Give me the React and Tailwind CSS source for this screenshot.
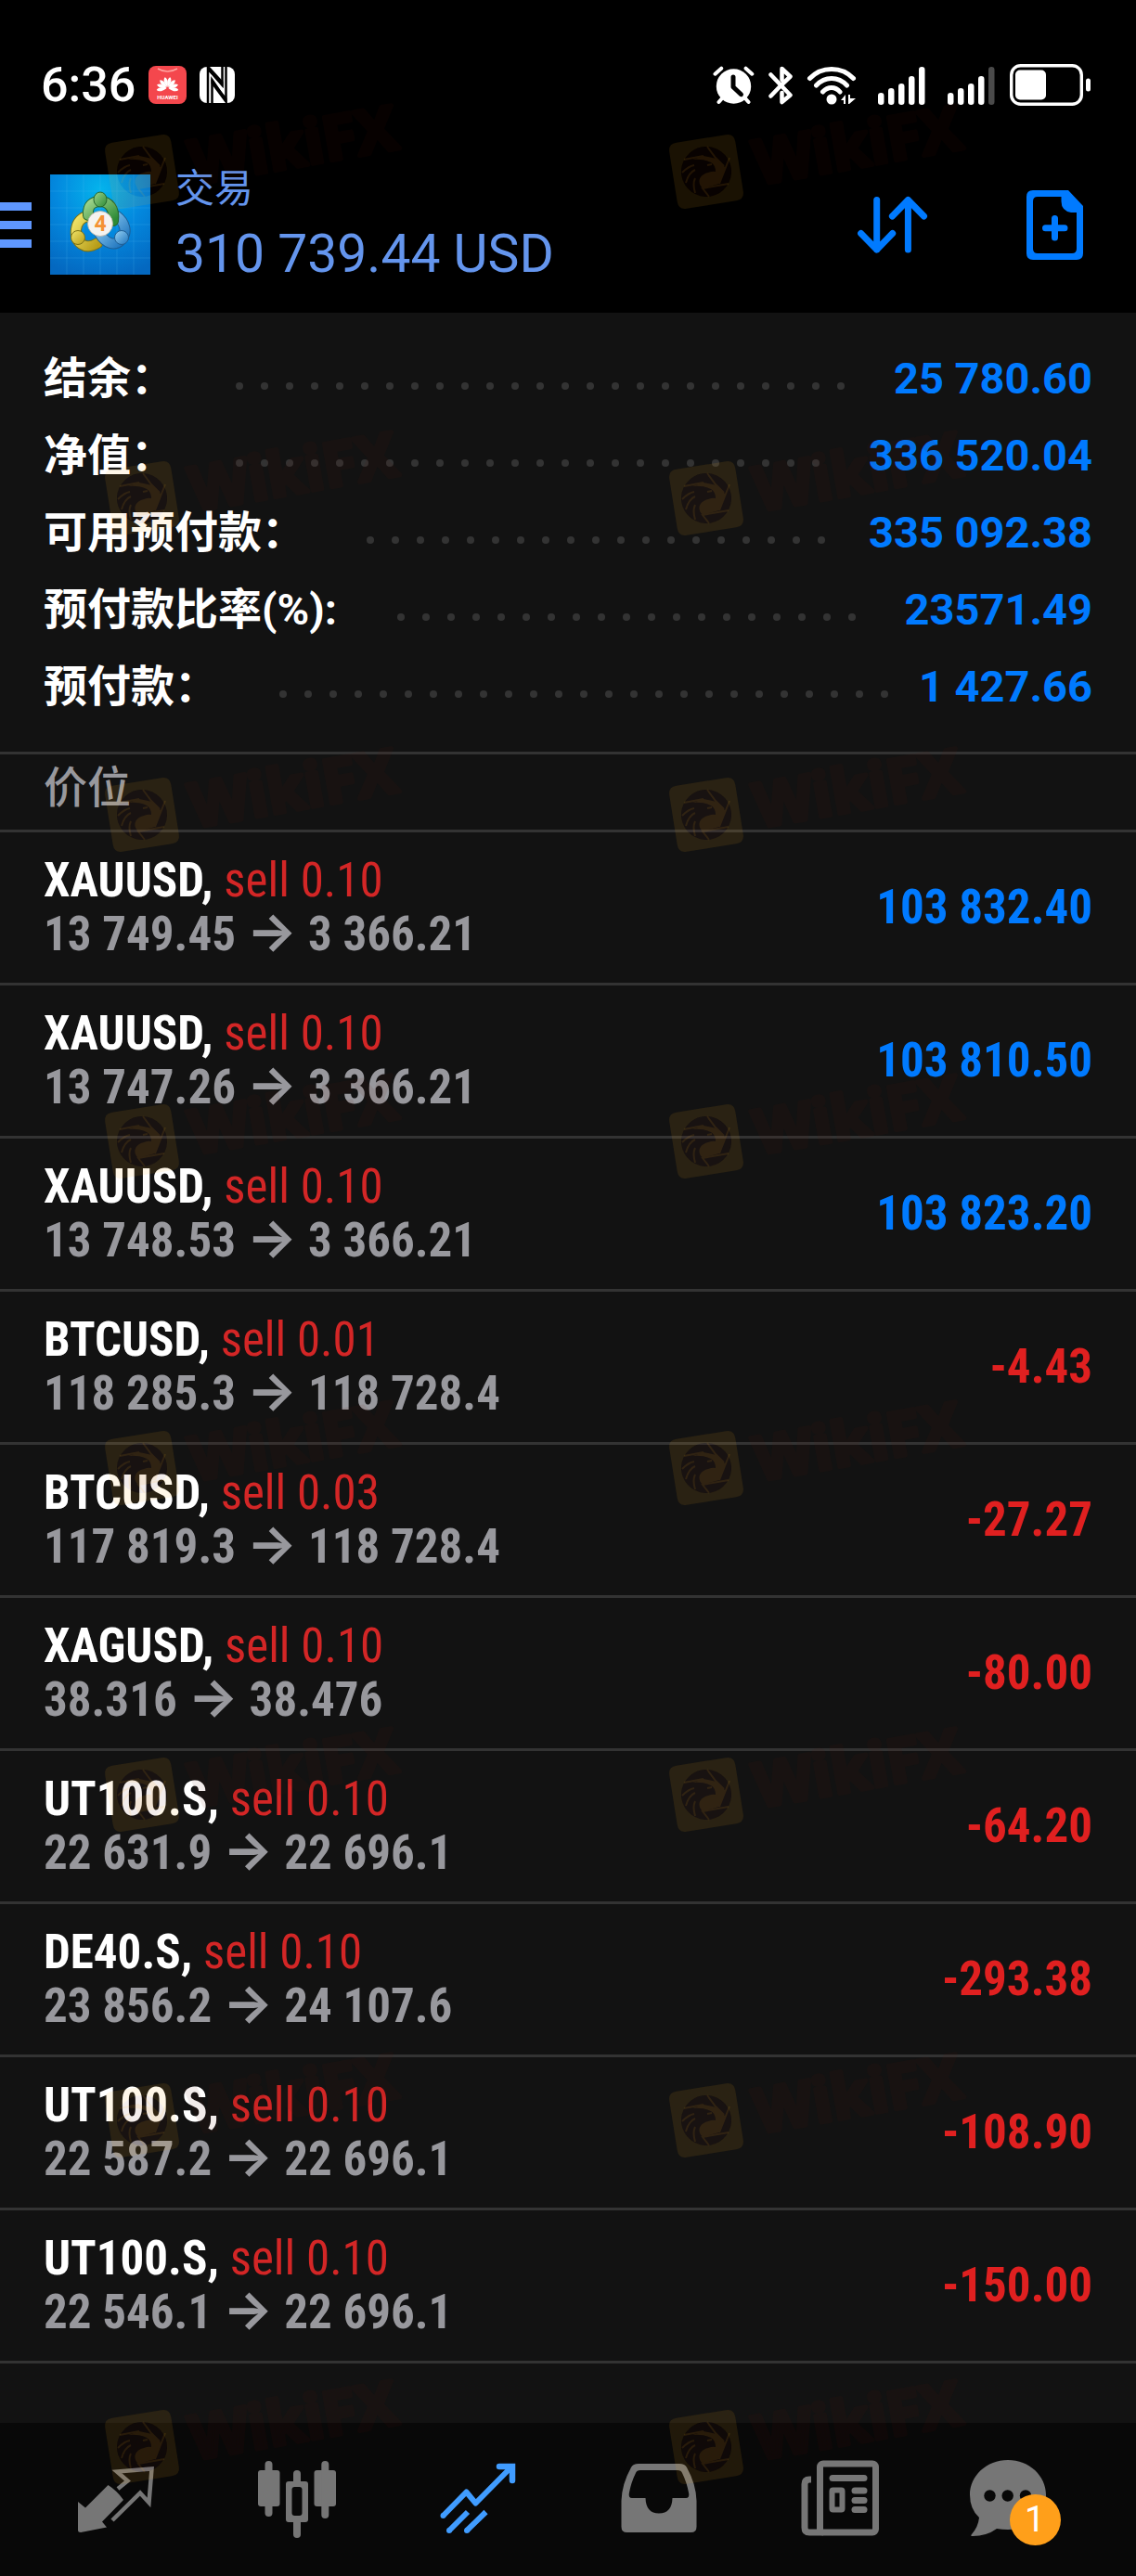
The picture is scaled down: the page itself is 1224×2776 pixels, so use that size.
import React from 'react'

const summary = [
  { label: '结余：', value: '25 780.60' },
  { label: '净值：', value: '336 520.04' },
  { label: '可用预付款：', value: '335 092.38' },
  { label: '预付款比率(%):', value: '23571.49' },
  { label: '预付款：', value: '1 427.66' },
]

const positions = [
  { id: 1, symbol: 'XAUUSD', volume: '0.10', open: '13 749.45', current: '3 366.21', profit: '103 832.40' },
  { id: 2, symbol: 'XAUUSD', volume: '0.10', open: '13 747.26', current: '3 366.21', profit: '103 810.50' },
  { id: 3, symbol: 'XAUUSD', volume: '0.10', open: '13 748.53', current: '3 366.21', profit: '103 823.20' },
  { id: 4, symbol: 'BTCUSD', volume: '0.01', open: '118 285.3', current: '118 728.4', profit: '-4.43' },
  { id: 5, symbol: 'BTCUSD', volume: '0.03', open: '117 819.3', current: '118 728.4', profit: '-27.27' },
  { id: 6, symbol: 'XAGUSD', volume: '0.10', open: '38.316', current: '38.476', profit: '-80.00' },
  { id: 7, symbol: 'UT100.S', volume: '0.10', open: '22 631.9', current: '22 696.1', profit: '-64.20' },
  { id: 8, symbol: 'DE40.S', volume: '0.10', open: '23 856.2', current: '24 107.6', profit: '-293.38' },
  { id: 9, symbol: 'UT100.S', volume: '0.10', open: '22 587.2', current: '22 696.1', profit: '-108.90' },
  { id: 10, symbol: 'UT100.S', volume: '0.10', open: '22 546.1', current: '22 696.1', profit: '-150.00' },
]

const watermarkRows = [124, 476, 817, 1169, 1521, 1873, 2224, 2576]

export default function App() {
  return (
    <div className="relative overflow-hidden bg-[#121212] font-['Roboto','Noto_Sans_CJK_SC',sans-serif]" lang="zh-CN">
      <header className="bg-black pb-[31px]">
        <StatusBar />
        <div className="flex items-center mt-16 pr-[57px]">
          <button aria-label="菜单" className="w-[34px] mr-5 flex flex-col gap-[11px]">
            <span className="h-[9px] bg-[#5f97ff]" />
            <span className="h-[9px] bg-[#5f97ff]" />
            <span className="h-[9px] bg-[#5f97ff]" />
          </button>
          <AppLogo />
          <div className="flex-1 ml-[27px] text-[#6495ed]">
            <h1 className="text-[42px] leading-[52px]">交易</h1>
            <p className="mt-3 text-[57px] leading-[64px]">310 739.44 USD</p>
          </div>
          <button aria-label="排序" className="mr-[105px]">
            <SortIcon />
          </button>
          <button aria-label="新订单">
            <NewOrderIcon />
          </button>
        </div>
      </header>

      <main className="pb-16">
        {/* Account summary */}
        <dl className="py-[29px] px-[47px]">
          {summary.map((row) => (
            <div key={row.label} className="flex items-center h-[83px] text-[47px] leading-[56px]">
              <dt className="font-bold text-white mr-14">{row.label}</dt>
              <Leader />
              <dd className="font-bold text-[#007aff]">{row.value}</dd>
            </div>
          ))}
        </dl>

        <h2 className="h-[87px] px-[47px] pb-2.5 flex items-center border-y-3 border-[#333] text-[47px] leading-[56px] font-medium text-[#98989d]">
          价位
        </h2>

        {/* Open positions */}
        <ul>
          {positions.map((position) => (
            <PositionRow key={position.id} position={position} />
          ))}
        </ul>
      </main>

      <BottomNav />
      <Watermarks />
    </div>
  )
}

function Leader() {
  // dots that do not fit wrap to a hidden second line
  return (
    <div aria-hidden="true" className="flex-1 h-2 mt-4 mr-[18px] flex flex-wrap overflow-hidden">
      {Array.from({ length: 40 }, (_, i) => (
        <span key={i} className="w-[27px] h-2 flex justify-center">
          <span className="size-2 rounded-full bg-[#333]" />
        </span>
      ))}
    </div>
  )
}

function PositionRow({ position }) {
  const isLoss = position.profit.startsWith('-')

  return (
    <li className="h-[165px] px-[47px] flex items-center justify-between border-b-3 border-[#333] font-['Roboto_Condensed','Roboto',sans-serif] text-[51px] leading-[58px] font-bold">
      <div>
        <p className="text-white">
          {position.symbol}, <span className="font-normal text-[#d32626]">sell {position.volume}</span>
        </p>
        <p className="text-[#98989d]">
          {position.open} <span className="font-['Inter'] text-[57px] leading-10">→</span> {position.current}
        </p>
      </div>
      <p className={isLoss ? 'text-[#e02020]' : 'text-[#007aff]'}>{position.profit}</p>
    </li>
  )
}

function StatusBar() {
  return (
    <div className="flex items-center pt-[69px] pl-11 pr-[49px] text-white">
      <span className="text-[52px] leading-[44px] font-medium mr-3.5">6:36</span>
      <svg className="w-[41px] h-[41px] mr-3.5" viewBox="0 0 41 41">
        <rect width="41" height="41" rx="8" fill="#f4474d" />
        <path d="M10 3 Q20.500 9 31 3" fill="none" stroke="#ffa39f" strokeWidth="1.500" />
        <g fill="#fff">
          {[-100, -72, -43, -14, 14, 43, 72, 100].map((angle) => (
            <path key={angle} d="M20.500 23 C18 18 18 14 20.500 12 C23 14 23 18 20.500 23Z" transform={`rotate(${angle} 20.500 24)`} />
          ))}
        </g>
        <text x="20.500" y="35.500" fontSize="6" fontWeight="700" textAnchor="middle" fill="#fff" fontFamily="Roboto">HUAWEI</text>
      </svg>
      <svg className="w-[38px] h-[39px]" viewBox="0 0 38 39">
        <rect width="38" height="39" rx="8" fill="#fff" />
        <path d="M9 39 V2 L24.500 20 V0 M13.500 39 V14 L28.500 36 V0" fill="none" stroke="#000" strokeWidth="2.500" />
        <path d="M7.750 0 H11 L25.500 16 V22 L9 4Z M12.500 13 L29.500 34 V39 H28 L12.500 18Z" fill="#000" />
      </svg>

      <div className="ml-auto flex items-center gap-[15px]">
        <svg className="w-[45px] h-[42px]" viewBox="0 0 45 42" fill="none" strokeLinecap="round" strokeLinejoin="round">
          <circle cx="22.500" cy="22" r="18.700" fill="#fff" />
          <path d="M2.500 8.700 L9.200 2.700 M42.300 8.700 L35.600 2.700 M6.500 39 L10 35 M38.500 39 L35 35" stroke="#fff" strokeWidth="4" />
          <path d="M22 12 V22.700 L30.500 30.700" stroke="#000" strokeWidth="5" />
        </svg>
        <svg className="w-[26px] h-[42px]" viewBox="0 0 26 42" fill="none" stroke="#fff" strokeWidth="4.500" strokeLinecap="round" strokeLinejoin="round">
          <path d="M2.500 9.500 L13.500 21 L23.500 31.500 L14.500 39 V29 M14.500 15 V3 L23.500 11.500 L13.500 21 L2.500 32.500" />
        </svg>
        <svg className="w-[54px] h-[42px]" viewBox="0 0 54 42" fill="none" stroke="#fff" strokeWidth="5" strokeLinecap="round">
          <path d="M3.500 13.500 C16 0 38 0 50.500 13.500 M10.500 21 C20 11 34 11 43.500 21 M17.500 28 C23 22 31 22 36 28" />
          <circle cx="27" cy="36" r="5.500" fill="#fff" stroke="none" />
          <path d="M37 37 L42 31 V41 H40 V37Z M45 31 H47 V35 H53 L46 41 H45Z" fill="#fff" stroke="none" />
        </svg>
        <Signal />
        <Signal weak />
        <svg className="w-[87px] h-[45px]" viewBox="0 0 87 45">
          <rect x="1.700" y="1.700" width="75.600" height="41.600" rx="10" fill="none" stroke="#fff" strokeWidth="3.400" />
          <rect x="6" y="6.500" width="33" height="32" rx="5" fill="#fff" />
          <rect x="82" y="15.500" width="5" height="14" rx="2.500" fill="#fff" />
        </svg>
      </div>
    </div>
  )
}

function Signal({ weak }) {
  return (
    <svg className="w-[52px] h-[42px] ml-2" viewBox="0 0 52 42" fill="#fff">
      <rect x="0" y="29" width="6.500" height="13" rx="3.200" />
      <rect x="11" y="24" width="6.500" height="18" rx="3.200" />
      <rect x="22" y="19" width="6.500" height="23" rx="3.200" />
      <rect x="33" y="11" width="6.500" height="31" rx="3.200" />
      <rect x="44" y="1" width="6.500" height="41" rx="3.200" fill={weak ? '#4a4a4a' : '#fff'} />
    </svg>
  )
}

function AppLogo() {
  return (
    <svg className="size-[108px]" viewBox="0 0 108 108">
      <defs>
        <radialGradient id="logoBg" cx="50%" cy="15%" r="90%">
          <stop offset="0" stopColor="#04b4ec" />
          <stop offset="0.500" stopColor="#0388de" />
          <stop offset="1" stopColor="#0468c0" />
        </radialGradient>
        <linearGradient id="green" x1="0" y1="0" x2="1" y2="1">
          <stop offset="0" stopColor="#9fd48b" />
          <stop offset="1" stopColor="#2c8a35" />
        </linearGradient>
        <linearGradient id="yellow" x1="0" y1="0" x2="1" y2="1">
          <stop offset="0" stopColor="#f2e56b" />
          <stop offset="1" stopColor="#b79d18" />
        </linearGradient>
        <linearGradient id="blue" x1="0" y1="0" x2="1" y2="1">
          <stop offset="0" stopColor="#9bd4f5" />
          <stop offset="1" stopColor="#1a72bd" />
        </linearGradient>
      </defs>
      <rect width="108" height="108" fill="url(#logoBg)" />
      <path d="M18 0 V108 M36 0 V108 M54 0 V108 M72 0 V108 M90 0 V108 M0 18 H108 M0 36 H108 M0 54 H108 M0 72 H108 M0 90 H108" stroke="#5cc4f5" strokeOpacity="0.200" />
      <g fill="none" strokeLinecap="round">
        <path d="M51 74 C38 82 26 74 28 59 C29 51 34 46 41 45" stroke="#7d7213" strokeWidth="12" />
        <path d="M51 74 C38 82 26 74 28 59 C29 51 34 46 41 45" stroke="url(#yellow)" strokeWidth="10" />
        <path d="M72 45 C80 51 84 62 77 70 C70 78 60 75 53 63" stroke="#1e5e94" strokeWidth="12" />
        <path d="M72 45 C80 51 84 62 77 70 C70 78 60 75 53 63" stroke="url(#blue)" strokeWidth="10" />
        <path d="M41 44 C40 33 46 29 54 29 C63 29 70 37 68 50" stroke="#25652b" strokeWidth="12" />
        <path d="M41 44 C40 33 46 29 54 29 C63 29 70 37 68 50" stroke="url(#green)" strokeWidth="10" />
      </g>
      <ellipse cx="54" cy="27" rx="7" ry="8" fill="url(#green)" stroke="#25652b" />
      <circle cx="30" cy="68" r="7.500" fill="url(#yellow)" stroke="#7d7213" />
      <circle cx="77" cy="68" r="7.500" fill="url(#blue)" stroke="#1e5e94" />
      <circle cx="54" cy="53" r="13.500" fill="#f5f3f0" stroke="#b9b3a5" strokeWidth="0.800" />
      <text x="54" y="61" fontSize="23" fontWeight="700" textAnchor="middle" fill="#f49233" fontFamily="Roboto">4</text>
    </svg>
  )
}

function SortIcon() {
  return (
    <svg className="w-[79px] h-[65px]" viewBox="0 0 79 65" fill="none" stroke="#007aff" strokeWidth="7" strokeLinecap="round" strokeLinejoin="round">
      <path d="M22.700 5.500 V59 M5.600 41.500 L22.700 59 L39.700 41.500" />
      <path d="M56.400 59 V5.500 M39.400 23 L56.400 5.500 L73.500 23" />
    </svg>
  )
}

function NewOrderIcon() {
  return (
    <svg className="w-[61px] h-[75px]" viewBox="0 0 61 75" fill="#007aff">
      <path
        fillRule="evenodd"
        d="M7 0 H45 L61 17 V68 Q61 75 54 75 H7 Q0 75 0 68 V7 Q0 0 7 0Z M12 7 Q7 7 7 12 V63 Q7 68 12 68 H49 Q54 68 54 63 V24 H48 Q37.500 22 37.500 12 V7Z"
      />
      <path d="M30.500 30.500 V51 M20.500 40.700 H41" stroke="#007aff" strokeWidth="7" strokeLinecap="round" />
    </svg>
  )
}

function BottomNav() {
  return (
    <nav className="grid grid-cols-6 justify-items-center px-[27px] pt-10 pb-[42px] bg-[#080808] text-[#767676]">
      <button aria-label="行情">
        <svg className="size-[84px]" viewBox="0 0 84 84" fill="currentColor">
          <path d="M1 45 L9 51.500 L33.500 27 Q43 33 50 43 L27 66.500 L32 72.500 L4 78 Q1 78 1 75.500Z" />
          <path d="M44 31 L54.500 22.500 L43 12.500 L80.500 9.500 L77.500 46 L68 35.500 L38 65" fill="none" stroke="currentColor" strokeWidth="4.500" />
        </svg>
      </button>
      <button aria-label="图表">
        <svg className="size-[84px]" viewBox="0 0 84 84" fill="currentColor">
          <rect x="0" y="11" width="23.500" height="39" rx="3" />
          <rect x="7.500" y="1" width="8" height="60" rx="4" />
          <rect x="60.500" y="11" width="23.500" height="39" rx="3" />
          <rect x="68.300" y="1" width="8" height="62" rx="4" />
          <rect x="38" y="11" width="8" height="20" rx="4" />
          <rect x="38" y="60" width="8" height="24" rx="4" />
          <rect x="30" y="23" width="24" height="44" rx="3" />
          <rect x="36.500" y="29" width="11" height="31" rx="3" fill="#080808" />
        </svg>
      </button>
      <button aria-label="交易" aria-current="page" className="text-[#409cff]">
        <svg className="size-[84px]" viewBox="0 0 84 84" fill="none" stroke="currentColor" strokeWidth="6">
          <path d="M4.500 60 L29.500 34.500 L39.500 46.500 L78 7.500" strokeLinejoin="round" />
          <path d="M65 7 H79 V22" strokeWidth="6.500" strokeLinecap="round" />
          <path d="M11 76 L31 56 M30 76 L50.500 56" />
          <g fill="currentColor" stroke="none">
            <circle cx="4.500" cy="60" r="3" />
            <circle cx="11" cy="76" r="3" />
            <circle cx="30" cy="76" r="3" />
          </g>
        </svg>
      </button>
      <button aria-label="历史">
        <svg className="size-[84px]" viewBox="0 0 84 84" fill="currentColor">
          <path
            fillRule="evenodd"
            d="M20 4 H64 Q70 4 72 8 Q82 26 82.500 44 V72 Q82.500 78 76.500 78 H7.500 Q1.500 78 1.500 72 V44 Q2 26 12 8 Q14 4 20 4Z M22 11 Q18 11 17 14 Q12 24 9.800 36 Q9 41 13 41 H27.500 Q28 57.500 42 57.500 Q56 57.500 56.500 41 H71 Q75 41 74.200 36 Q72 24 67 14 Q66 11 62 11Z"
          />
        </svg>
      </button>
      <button aria-label="新闻">
        <svg className="size-[84px]" viewBox="0 0 84 84" fill="none" stroke="currentColor" strokeWidth="7">
          <rect x="20.500" y="4" width="60" height="74" rx="3.500" />
          <path d="M11 21 H9 Q4 21 4 26 V73 Q4 78 9 78 H24" />
          <g fill="currentColor" stroke="none">
            <rect x="30.500" y="16" width="41" height="7" rx="3.500" />
            <rect x="54.500" y="29.500" width="17" height="7" rx="3.500" />
            <rect x="54.500" y="40" width="17" height="7" rx="3.500" />
            <rect x="54.500" y="50" width="17" height="7" rx="3.500" />
          </g>
          <rect x="33.500" y="32.500" width="11" height="21" rx="1" strokeWidth="6" />
        </svg>
      </button>
      <button aria-label="消息" className="relative w-[110px]">
        <svg className="size-[84px]" viewBox="0 0 84 84">
          <path d="M41 0 C64 0 82 17 82 37.500 C82 59 64 75 41 75 Q35 75 29 74 Q18 82 3 82 Q0 82 2 80 Q9 72 10 62 Q0 53 0 37.500 C0 17 18 0 41 0Z" fill="currentColor" />
          <g fill="#080808">
            <circle cx="21.500" cy="38.500" r="6.200" />
            <circle cx="40.700" cy="38.500" r="6.200" />
            <circle cx="60" cy="38.500" r="6.200" />
          </g>
        </svg>
        <span className="absolute right-3 -bottom-2 size-[55px] rounded-full bg-[#ff9f1a] text-white text-[39px] leading-[55px] text-center">
          1
        </span>
      </button>
    </nav>
  )
}

function Watermarks() {
  return (
    <div aria-hidden="true" className="absolute inset-0 pointer-events-none">
      {watermarkRows.map((top) => (
        <div key={top} className="absolute left-28 -right-26 grid grid-cols-2" style={{ top }}>
          <Watermark />
          <Watermark />
        </div>
      ))}
    </div>
  )
}

function Watermark() {
  return (
    <svg className="w-[340px] h-[110px] overflow-visible" viewBox="0 0 340 110">
      <path
        fillRule="evenodd"
        d="M14 25 H68 Q77 25 77 34 V88 Q77 97 68 97 H14 Q5 97 5 88 V34 Q5 25 14 25Z M41 34 A27 27 0 1 0 41 88 A27 27 0 1 0 41 34Z"
        transform="rotate(-9 41 61)"
        fill="#ffb41e"
        fillOpacity="0.100"
      />
      <circle cx="41" cy="61" r="27" fill="#601408" fillOpacity="0.080" />
      <g opacity="0.100">
        <path
          d="M26 48 L38 44 L52 47 L59 54 L62 57 L55 74 L37 79 C30 72 34 64 43 62 Q48 60 51 61 Q51 54 46 51 Q38 47 26 48Z"
          fill="#ffb41e"
        />
        <path
          d="M17 48 L38 44 M42 34 L51 46 L60 55 M66 46 L55 74 M65 74 L37 79 L44 88 M47 53 L42 54 M15 62 Q22 55 28 54 M19 73 Q22 62 29 59 M29 84 Q26 74 29 68"
          fill="none"
          stroke="#ffb41e"
          strokeWidth="2"
        />
      </g>
      <text
        x="97"
        y="75"
        transform="rotate(-10 97 75)"
        fontFamily="Open Sans"
        fontSize="66"
        fontWeight="700"
        fill="#601408"
        stroke="#601408"
        strokeWidth="5"
        strokeLinejoin="round"
        opacity="0.080"
      >
        WikiFX
      </text>
    </svg>
  )
}
